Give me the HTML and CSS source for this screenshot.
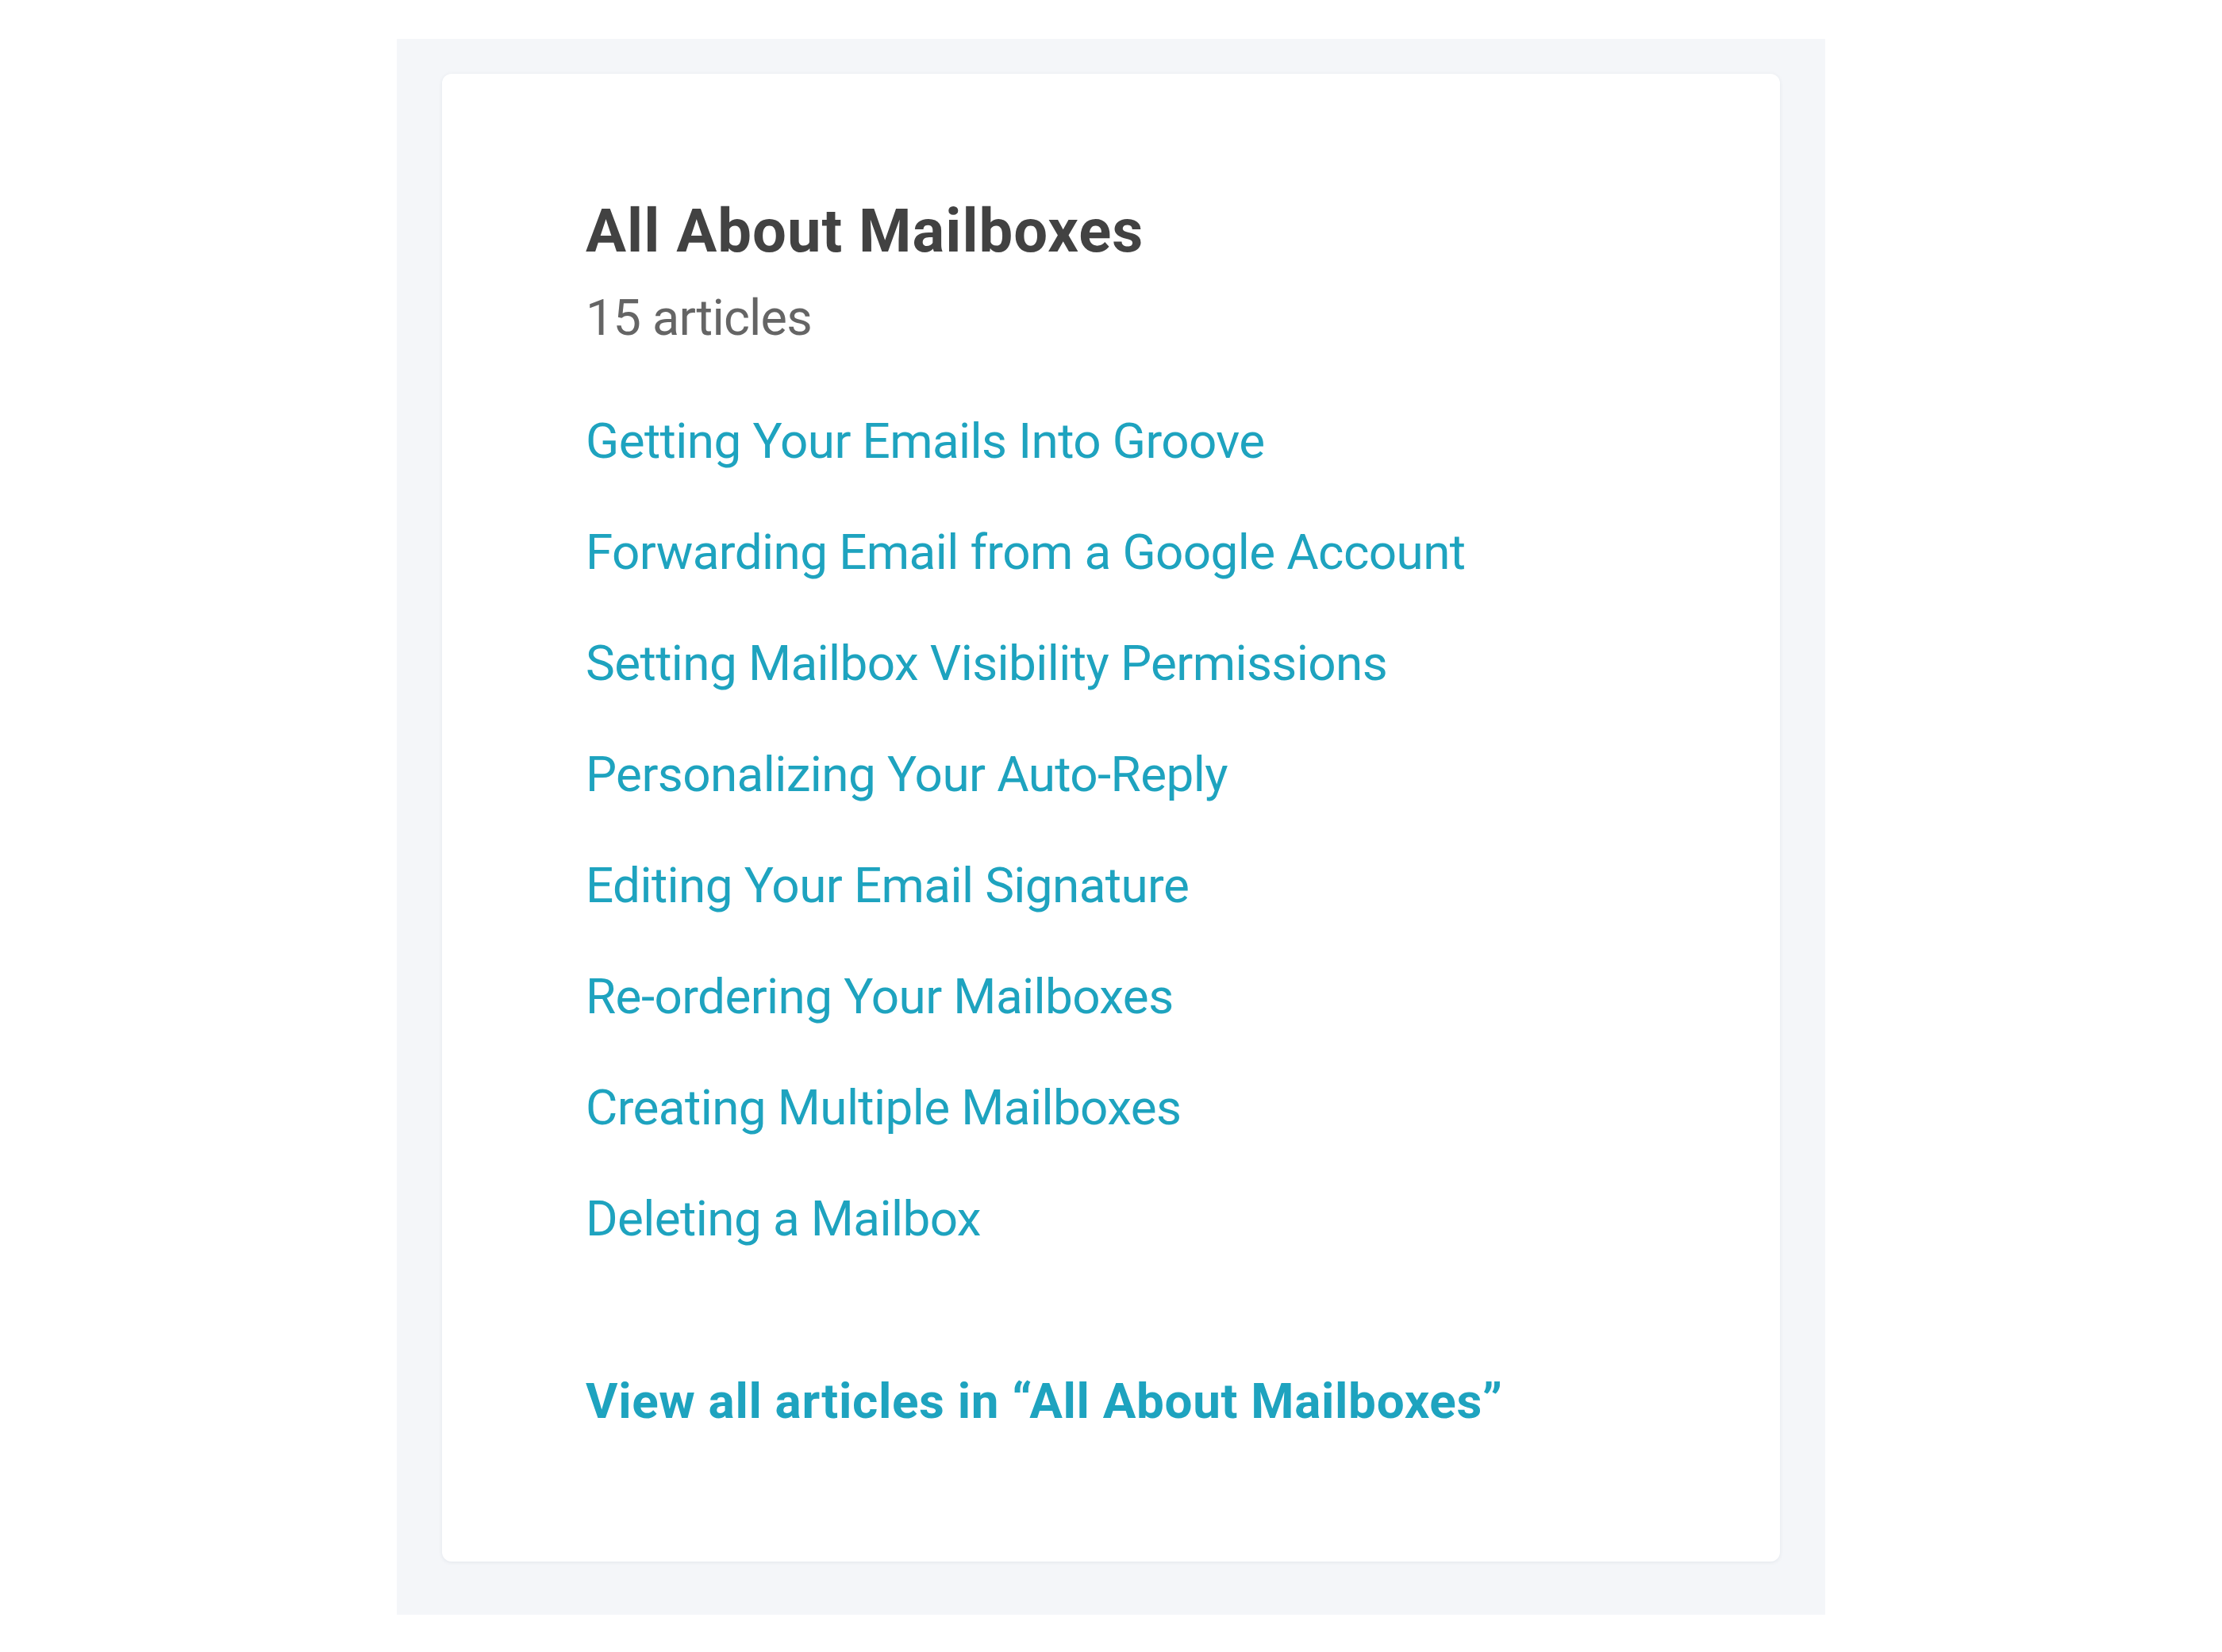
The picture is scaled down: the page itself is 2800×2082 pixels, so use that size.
FILE: index.html
```html
<!DOCTYPE html>
<html lang="en">
<head>
<meta charset="utf-8">
<title>All About Mailboxes</title>
<link rel="stylesheet" href="styles.css">
</head>
<body>
<div class="frame">
  <section class="card">
    <h2 class="title">All About Mailboxes</h2>
    <p class="count">15 articles</p>
    <ul class="articles">
      <li><a href="#">Getting Your Emails Into Groove</a></li>
      <li><a href="#">Forwarding Email from a Google Account</a></li>
      <li><a href="#">Setting Mailbox Visibility Permissions</a></li>
      <li><a href="#">Personalizing Your Auto-Reply</a></li>
      <li><a href="#">Editing Your Email Signature</a></li>
      <li><a href="#">Re-ordering Your Mailboxes</a></li>
      <li><a href="#">Creating Multiple Mailboxes</a></li>
      <li><a href="#">Deleting a Mailbox</a></li>
    </ul>
    <a class="view-all" href="#">View all articles in “All About Mailboxes”</a>
  </section>
</div>
</body>
</html>
```

FILE: styles.css
```css
html, body {
  margin: 0;
  padding: 0;
  background: #ffffff;
}

body {
  font-family: Roboto, "Liberation Sans", sans-serif;
}

.frame {
  margin-left: 500px;
  margin-top: 49px;
  width: 1800px;
  box-sizing: border-box;
  padding: 44px 57px 67px;
  background: #f4f6f9;
}

.card {
  background: #ffffff;
  border-radius: 12px;
  box-shadow: 0 1px 5px rgba(30, 45, 80, 0.08);
  padding: 153px 181px 162px;
  display: flex;
  flex-direction: column;
  align-items: flex-start;
}

.title {
  margin: 0;
  font-size: 76px;
  line-height: 90px;
  font-weight: 700;
  letter-spacing: 1px;
  color: #424242;
}

.count {
  margin: 25px 0 0;
  font-size: 63px;
  line-height: 80px;
  letter-spacing: -0.8px;
  color: #656565;
}

.articles {
  list-style: none;
  margin: 75px 0 0;
  padding: 0;
  display: flex;
  flex-direction: column;
  gap: 60px;
}

.articles li {
  font-size: 62px;
  line-height: 80px;
  letter-spacing: -0.6px;
}

.articles a,
.view-all {
  color: #1ea3bf;
  text-decoration: none;
}

.view-all {
  margin-top: 150px;
  font-size: 62px;
  line-height: 80px;
  font-weight: 700;
  letter-spacing: 0.65px;
}
```
